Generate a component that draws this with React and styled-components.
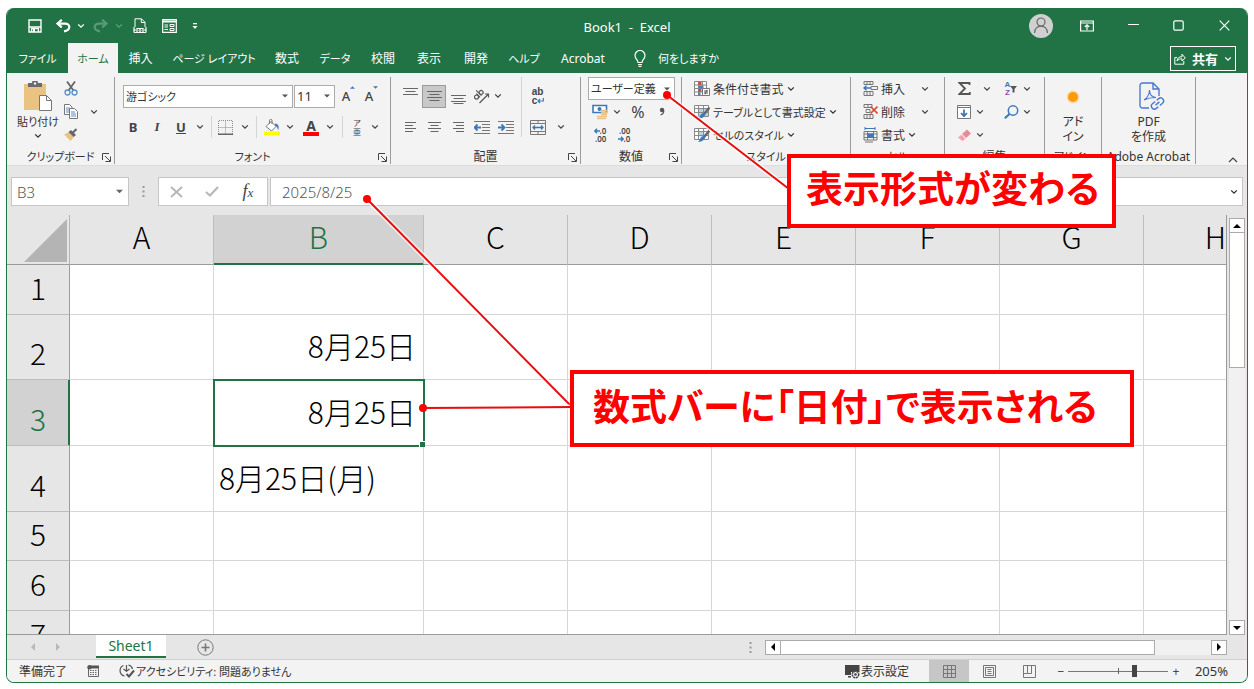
import { useState } from "react";
import styled, { createGlobalStyle } from "styled-components";

const tabs = [
  { name: "ファイル", width: 61, kana: true },
  { name: "ホーム", width: 50, kana: true },
  { name: "挿入", width: 45 },
  { name: "ページ レイアウト", width: 102, kana: true },
  { name: "数式", width: 44 },
  { name: "データ", width: 52, kana: true },
  { name: "校閲", width: 44 },
  { name: "表示", width: 48 },
  { name: "開発", width: 46 },
  { name: "ヘルプ", width: 50, kana: true },
  { name: "Acrobat", width: 68 },
];

const columns = [
  { name: "A", width: 144 },
  { name: "B", width: 210 },
  { name: "C", width: 144 },
  { name: "D", width: 144 },
  { name: "E", width: 144 },
  { name: "F", width: 144 },
  { name: "G", width: 144 },
  { name: "H", width: 144 },
];

const rows = [
  { name: "1", height: 50 },
  { name: "2", height: 65, cells: { B: { text: "8月25日", align: "right" } } },
  { name: "3", height: 66, cells: { B: { text: "8月25日", align: "right" } } },
  { name: "4", height: 66, cells: { B: { text: "8月25日(月)", align: "left" } } },
  { name: "5", height: 49 },
  { name: "6", height: 50 },
  { name: "7", height: 50 },
];

/* icons */

function Chevron() {
  return (
    <svg width="8" height="6" viewBox="0 0 8 6" fill="none" stroke="currentColor" strokeWidth="1.3">
      <path d="M1.2 1.4 4 4.2 6.8 1.4" />
    </svg>
  );
}

function Triangle({ dir = "down", size = 6 }) {
  const points = {
    down: "0,2 8,2 4,6",
    up: "0,6 8,6 4,2",
    left: "6,0 6,8 2,4",
    right: "2,0 2,8 6,4",
  };
  return (
    <svg width={size} height={size} viewBox="0 0 8 8" fill="currentColor">
      <polygon points={points[dir]} />
    </svg>
  );
}

function Launcher() {
  return (
    <svg width="9" height="9" viewBox="0 0 9 9" fill="none" stroke="#444" strokeWidth="1">
      <path d="M.5 7V.5H7M3 3l5 5M8.5 3.5v5h-5" />
    </svg>
  );
}

function SaveIcon() {
  return (
    <svg width="14" height="14" viewBox="0 0 14 14" fill="none" stroke="#fff" strokeWidth="1.4">
      <path d="M1 1h12v12H1z" />
      <path d="M1 8h12" />
      <path d="M3.600 13V9.500h6.800V13" />
      <path d="M5 10h2v3H5z" fill="#fff" stroke="none" />
    </svg>
  );
}

function UndoIcon({ flip }) {
  return (
    <svg width="15" height="14" viewBox="0 0 15 14" fill="none" stroke={flip ? "#5a9a76" : "#fff"} strokeWidth="2.2">
      <g transform={flip ? "matrix(-1 0 0 1 15 0)" : undefined}>
        <path d="M5.8.8 1.6 4.6l4.2 3.8" />
        <path d="M1.8 4.6H9c6 0 5.8 7-1 7.8" />
      </g>
    </svg>
  );
}

function PrintPreviewIcon() {
  return (
    <svg width="14" height="16" viewBox="0 0 14 16" fill="none" stroke="#fff">
      <path d="M2 9V.8h6.5L12 4.3V9M8.3 1v3.5H12" />
      <path d="M1 9v5.5M13 9v5.5M1 12h2M11 12h2M1 14.5h12M4 10.5h6v4H4z" strokeWidth="1.2" />
      <circle cx="7" cy="12.5" r="1" />
    </svg>
  );
}

function FormIcon() {
  return (
    <svg width="15" height="14" viewBox="0 0 15 14" fill="none" stroke="#fff" strokeWidth="1.2">
      <path d="M.7.7h13.6v12.6H.7z" />
      <path d="M.7 2.5h13.6" strokeWidth="2" />
      <path d="M2.5 6h3.5M2.5 8h3.5M2.5 10.500h3.5M8 5.500h4v2H8zM8 9.500h4v2H8z" strokeWidth="1" />
    </svg>
  );
}

function CustomizeIcon() {
  return (
    <svg width="6" height="8" viewBox="0 0 6 8" fill="#fff">
      <path d="M1 1h4v1.2H1zM.5 4h5L3 7z" />
    </svg>
  );
}

function PersonIcon() {
  return (
    <svg width="16" height="17" viewBox="0 0 16 17" fill="none" stroke="#666" strokeWidth="1.2">
      <circle cx="8" cy="5" r="4" />
      <path d="M1.500 16c.5-9.300 12.500-9.300 13 0" />
    </svg>
  );
}

function RibbonOptionsIcon() {
  return (
    <svg width="14" height="12" viewBox="0 0 14 12" fill="none" stroke="#fff" strokeWidth="1.2">
      <path d="M.6 1h12.8v10H.6zM.6 3h12.8M7 10V5M4.8 7 7 4.8 9.2 7" />
    </svg>
  );
}

function MinimizeIcon() {
  return (
    <svg width="11" height="11" viewBox="0 0 11 11" stroke="#fff" strokeWidth="1.2">
      <path d="M0 4.500h11" />
    </svg>
  );
}

function MaximizeIcon() {
  return (
    <svg width="11" height="11" viewBox="0 0 11 11" fill="none" stroke="#fff" strokeWidth="1.2">
      <rect x=".8" y=".8" width="9.4" height="9.4" rx="1.5" />
    </svg>
  );
}

function CloseIcon() {
  return (
    <svg width="11" height="11" viewBox="0 0 11 11" stroke="#fff" strokeWidth="1.2">
      <path d="M.7.7l9.6 9.6M10.3.7.7 10.3" />
    </svg>
  );
}

function BulbIcon() {
  return (
    <svg width="12" height="17" viewBox="0 0 12 17" fill="none" stroke="#fff" strokeWidth="1.2">
      <path d="M4 12.500C4 9.500 1 9 1 5.500a5 5 0 0 1 10 0c0 3.500-3 4-3 7z" />
      <path d="M4 14.500h4M4.500 16.300h3" />
    </svg>
  );
}

function ShareIcon() {
  return (
    <svg width="12" height="12" viewBox="0 0 12 12" fill="none" stroke="#fff">
      <path d="M3 4.500H.8v6.700h9V8" />
      <path d="M3 8c.3-3 2-4.300 5-4.300V1.200L11.300 5 8 8V5.800C6 5.800 4.300 6.300 3 8z" />
    </svg>
  );
}

function PasteIcon() {
  return (
    <svg width="28" height="30" viewBox="0 0 28 30">
      <path d="M0 3h22v26H0z" fill="#eac282" />
      <path d="M4 2h4a3 3 0 0 1 6 0h4v4H4z" fill="#6b6b6b" />
      <circle cx="11" cy="2.500" r="1.200" fill="#f3f3f3" />
      <path d="M15.500 14.500h7l5 5v10h-12z" fill="#fff" stroke="#777" />
      <path d="M22.500 14.500v5h5" fill="none" stroke="#777" />
    </svg>
  );
}

function CutIcon() {
  return (
    <svg width="14" height="15" viewBox="0 0 14 15" fill="none">
      <path d="M3 .5 9.500 9.500M11 .5 4.500 9.500" stroke="#666" strokeWidth="1.8" />
      <circle cx="3.500" cy="11.500" r="2.500" stroke="#5b8dc4" strokeWidth="1.3" />
      <circle cx="10.500" cy="11.500" r="2.500" stroke="#5b8dc4" strokeWidth="1.3" />
    </svg>
  );
}

function CopyIcon() {
  return (
    <svg width="14" height="15" viewBox="0 0 14 15" fill="#fff" stroke="#777">
      <path d="M.5.5h5l2.500 2.500v7.500H.5z" />
      <path d="M2 4h4M2 6h4M2 8h4" stroke="#5b8dc4" />
      <path d="M5.500 4.500h5l3 3v7h-8z" />
      <path d="M7 8h4M7 10h5M7 12h5" stroke="#5b8dc4" />
    </svg>
  );
}

function PainterIcon() {
  return (
    <svg width="14" height="13" viewBox="0 0 14 13">
      <path d="M0 6.500 5 4l5 5-3.500 4z" fill="#eac282" />
      <path d="M4.500 4 7 2l5 5-2.300 2z" fill="#666" />
      <path d="M9 4.500 12.500 1" stroke="#666" strokeWidth="2.2" />
    </svg>
  );
}

function BordersIcon() {
  return (
    <svg width="15" height="15" viewBox="0 0 15 15" fill="none" stroke="#8a8a8a">
      <path d="M.5 14V.5h14V14M7.500.5V14M.5 7.500h14" strokeDasharray="1 1" />
      <path d="M0 14.300h15" stroke="#666" strokeWidth="1.400" />
    </svg>
  );
}

function FillColorIcon() {
  return (
    <svg width="16" height="17" viewBox="0 0 16 17" fill="none">
      <path d="M2 7.500 7 2.500l5 5-4.500 4.500z" fill="#fff" stroke="#777" />
      <path d="M5.500 5V1.500c0-1.500 2.500-1.500 2.500 0V5" stroke="#777" />
      <path d="M11 4.500c4 .5 4.500 3.500 3 7-.5-3-1-4-3-4.500z" fill="#4a7ebb" />
      <path d="M0 12.500h16v4H0z" fill="#ff0" />
    </svg>
  );
}

function AlignIcon({ kind }) {
  const lines = {
    top: "M0 .5h15M2.500 3.500h10M0 6.500h15",
    middle: "M0 3.500h15M2.500 6.500h10M0 9.500h15M2.500 12.500h10",
    bottom: "M0 7.500h15M2.500 10.500h10M0 13.500h15M2.500 15.500h10",
    left: "M2 3.500h11M2 6.500h8M2 9.500h11M2 12.500h8",
    center: "M1 3.500h13M3.500 6.500h8M1 9.500h13M3.500 12.500h8",
    right: "M2 3.500h11M5 6.500h8M2 9.500h11M5 12.500h8",
  };
  return (
    <svg width="15" height="16" viewBox="0 0 15 16" stroke="#666">
      <path d={lines[kind]} />
    </svg>
  );
}

function OrientationIcon() {
  return (
    <svg width="16" height="15" viewBox="0 0 16 15" fill="none" stroke="#555" strokeWidth="1.200">
      <g transform="rotate(-45 5 7)">
        <circle cx="2.500" cy="6" r="2" />
        <path d="M4.800 3.500v5M7 1v7.500" />
        <circle cx="9" cy="6" r="2" />
      </g>
      <path d="M5.500 14 14 5.500M11 5h3.500v3.500" />
    </svg>
  );
}

function IndentIcon({ inward }) {
  return (
    <svg width="16" height="13" viewBox="0 0 16 13" fill="none">
      <path d="M0 .5h16M8 3.500h8M8 6.500h8M8 9.500h8M0 12.500h16" stroke="#777" />
      <path
        d={inward ? "M0 6.500h6M3.500 3.500l3 3-3 3" : "M1 6.500h6M3.500 3.500l-3 3 3 3"}
        stroke="#3c78b8"
        strokeWidth="1.8"
      />
    </svg>
  );
}

function ReturnIcon() {
  return (
    <svg width="7" height="6" viewBox="0 0 7 6" fill="none" stroke="#3c78b8" strokeWidth="1.2">
      <path d="M6.300 0v3H1M3 1 1 3l2 2" />
    </svg>
  );
}

function MergeIcon() {
  return (
    <svg width="16" height="15" viewBox="0 0 16 15" fill="none" stroke="#777">
      <path d="M.5.5h15v14H.5zM.5 3.500h15M.5 11.500h15M8 .5v3M8 11.500v3" />
      <path d="M3 7.500h10M5 5.500l-2 2 2 2M11 5.500l2 2-2 2" stroke="#3c78b8" strokeWidth="1.3" />
    </svg>
  );
}

function CurrencyIcon() {
  return (
    <svg width="16" height="16" viewBox="0 0 16 16" fill="none">
      <path d="M1 1.500h13.500v7H1z" fill="#fff" stroke="#3c78b8" strokeWidth="1.6" />
      <circle cx="7.500" cy="5" r="2" fill="#3c78b8" />
      <path d="M9 6.500h6M9 8.500h6M9 10.500h6M5 12.500h10M5 14.500h9" stroke="#e9c184" strokeWidth="1.6" />
    </svg>
  );
}

function CommaIcon() {
  return (
    <svg width="6" height="9" viewBox="0 0 6 9">
      <circle cx="3" cy="3" r="2.200" fill="#555" />
      <path d="M4.700 3C5 5.500 3.500 7.300 1.500 8" fill="none" stroke="#555" strokeWidth="1.200" />
    </svg>
  );
}

function SmallArrow({ dir }) {
  return (
    <svg width="6" height="6" viewBox="0 0 6 6" fill="none" stroke="#3c78b8" strokeWidth="1.4">
      <path d={dir === "left" ? "M6 3H1M3 .8.8 3 3 5.200" : "M0 3h5M3 .8 5.200 3 3 5.200"} />
    </svg>
  );
}

function ConditionalIcon() {
  return (
    <svg width="16" height="16" viewBox="0 0 16 16" fill="none">
      <path d="M.5.5h12v14H.5zM.5 4h12M.5 7.500h12M.5 11h12M4.500.5v14M8.500.5v14" stroke="#888" fill="#fff" />
      <path d="M4.500 1h3v3h-3zM4.500 8h3v3h-3z" fill="#c94f3c" />
      <path d="M4.500 4.500h5v3h-5zM4.500 11.500h2v3h-2z" fill="#4a7ebb" />
      <path d="M8.500 7.500h7v7h-7z" fill="#fff" stroke="#777" />
      <path d="M10 10h4M10 12h4M13 8.800l-2 4.500" stroke="#555" />
    </svg>
  );
}

function TableStyleIcon({ cell }) {
  return (
    <svg width="16" height="16" viewBox="0 0 16 16" fill="none">
      <path d="M.5 1.500h14v11H.5z" fill="#fff" />
      <path d={cell ? "M4.500 4.500h6v5h-6z" : "M4.500 5h10v7h-10z"} fill="#b9d0e8" />
      <path d="M.5 1.500h14v11H.5zM.5 4.500h14M.5 8.500h14M4.500 1.500v11M9.500 1.500v11" stroke="#8a8a8a" />
      <path d="M15.500 3.500 10 10" stroke="#666" strokeWidth="2.4" />
      <path d="M10.500 9c1 1 1 2 0 3-1.500 2-4 3-6.500 3C6.500 13 6 8.500 10.500 9z" fill="#3c78b8" />
    </svg>
  );
}

function InsertCellsIcon() {
  return (
    <svg width="15" height="15" viewBox="0 0 15 15" fill="none" stroke="#777">
      <path d="M1 .5h9v3H1zM4 .5v3M7 .5v3M1 10.500h9v4H1zM4 10.500v4M7 10.500v4M8 5.500h6.500v3H8z" />
      <path d="M1 7h7M3.500 4.800 1 7l2.500 2.200" stroke="#3c78b8" strokeWidth="1.5" />
    </svg>
  );
}

function DeleteCellsIcon() {
  return (
    <svg width="15" height="15" viewBox="0 0 15 15" fill="none" stroke="#777">
      <path d="M1 .5h8v3H1zM5 .5v3M1 10.500h9v4H1zM4 10.500v4M7 10.500v4M3 5.500h4v3H3z" />
      <path d="M7.500 2.500l7 7M14.500 2.500l-7 7" stroke="#d8492f" strokeWidth="1.7" />
    </svg>
  );
}

function FormatCellsIcon() {
  return (
    <svg width="15" height="16" viewBox="0 0 15 16" fill="none" stroke="#777">
      <path d="M2 1.500h10M2 0v3M12 0v3" stroke="#3c78b8" />
      <path d="M1 4.500h13v8.500H1zM1 7h13M1 10.500h13M4.500 4.500v8.500M10.500 4.500v8.500M2 15h8" />
      <path d="M4.500 6.500h6v4.500h-6z" fill="#3c78b8" stroke="none" />
    </svg>
  );
}

function SigmaIcon() {
  return (
    <svg width="13" height="13" viewBox="0 0 13 13" fill="none" stroke="#555" strokeWidth="1.8">
      <path d="M11.500 3V1H1.500L7 6.500l-5.500 5.500h10.300V10" />
    </svg>
  );
}

function FunnelIcon() {
  return (
    <svg width="7" height="8" viewBox="0 0 7 8" fill="#555">
      <path d="M0 1h7L4.500 4v3.500h-2V4z" />
    </svg>
  );
}

function FillDownIcon() {
  return (
    <svg width="14" height="14" viewBox="0 0 14 14" fill="none">
      <path d="M.5.5h13v13H.5zM.5 2.500h13" fill="#fff" stroke="#777" />
      <path d="M7 4.500v6.500M4 8l3 3.200L10 8" stroke="#3c78b8" strokeWidth="1.8" />
    </svg>
  );
}

function FindIcon() {
  return (
    <svg width="15" height="14" viewBox="0 0 15 14" fill="none" stroke="#3c78b8" strokeWidth="1.5">
      <circle cx="9" cy="5.500" r="4.700" />
      <path d="M5.500 9 .8 13.300" strokeWidth="2" />
    </svg>
  );
}

function EraserIcon() {
  return (
    <svg width="13" height="12" viewBox="0 0 13 12">
      <path d="M4 5 9 .5l4 4L8 9z" fill="#e88a98" />
      <path d="M3.300 5.700 7.300 9.700 4.500 12 0 8.500z" fill="#f0a3ae" />
    </svg>
  );
}

function PdfIcon() {
  return (
    <svg width="32" height="29" viewBox="-6 0 32 29" fill="none" stroke="#4a78d0" strokeWidth="1.4">
      <path d="M10 26H3.500A2.500 2.500 0 0 1 1 23.500v-20A2.500 2.500 0 0 1 3.500 1H14l6 6v7M14 1v6h6" />
      <path d="M5 18c3-1.500 5.500-6 5.500-10 0 4 2 7 6.500 7.500-4 0-8 .5-12 2.500z" strokeWidth="1.1" />
      <g transform="rotate(-40 18.500 21.500)">
        <path d="M17 24.500h-2.500a3 3 0 0 1 0-6H18M20 18.500h2.500a3 3 0 0 1 0 6H19M16 21.500h5" />
      </g>
    </svg>
  );
}

function AddInIcon() {
  return (
    <svg width="14" height="14" viewBox="0 0 14 14">
      <circle cx="7" cy="7" r="6.500" fill="#fbdcae" />
      <circle cx="7" cy="7" r="5" fill="#ff9a0d" />
    </svg>
  );
}

function DotsIcon() {
  return (
    <svg width="3" height="11" viewBox="0 0 3 11" fill="#999">
      <path d="M.5 0h2v2h-2zM.5 4.500h2v2h-2zM.5 9h2v2h-2z" />
    </svg>
  );
}

function CancelIcon() {
  return (
    <svg width="13" height="12" viewBox="0 0 13 12" stroke="#b5b5b5" strokeWidth="1.8">
      <path d="M1 1l11 10M12 1 1 11" />
    </svg>
  );
}

function EnterIcon() {
  return (
    <svg width="14" height="11" viewBox="0 0 14 11" fill="none" stroke="#b8b8b8" strokeWidth="2.2">
      <path d="M1 6l4 3.500L13 1" />
    </svg>
  );
}

function AddSheetIcon() {
  return (
    <svg width="17" height="17" viewBox="0 0 17 17" fill="none" stroke="#777">
      <circle cx="8.500" cy="8.500" r="7.700" />
      <path d="M8.500 4.500v8M4.500 8.500h8" strokeWidth="1.6" />
    </svg>
  );
}

function MacroIcon() {
  return (
    <svg width="12" height="12" viewBox="0 0 12 12">
      <path d="M3 .5h9v3H3z" fill="#555" />
      <circle cx="2.500" cy="2.200" r="2.200" fill="#555" />
      <path d="M1.500 4v7.500h10V3.500" fill="none" stroke="#666" />
      <path d="M3 5.500h7.500M3 7.500h7.500M3 9.500h7.500" stroke="#666" strokeDasharray="1.500 1" />
    </svg>
  );
}

function AccessibilityIcon() {
  return (
    <svg width="16" height="14" viewBox="0 0 16 14" fill="none" stroke="#555" strokeWidth="1.2">
      <path d="M4.500 1.500a5.500 5.500 0 0 0 1 10.500M9.500 1a5.500 5.500 0 0 1 4 4M7.500 1v6M4.500 5l3 2.200L10.500 5" />
      <path d="M7.500 10l2.500 2.500 5-6" strokeWidth="2" />
    </svg>
  );
}

function DisplaySettingsIcon() {
  return (
    <svg width="15" height="15" viewBox="0 0 15 15">
      <path d="M0 1h14.500v7H6v3H0zM3 12h3v1.500H3z" fill="#444" />
      <circle cx="10.500" cy="10.500" r="3.200" fill="#f3f3f3" stroke="#444" strokeWidth="1.5" strokeDasharray="2 .6" />
      <circle cx="10.500" cy="10.500" r="1.300" fill="#444" />
    </svg>
  );
}

function ViewIcon({ kind }) {
  const paths = {
    normal: "M.5.5h12v12H.5zM.5 4.500h12M.5 8.500h12M4.500.5v12M8.500.5v12",
    layout: "M.5.5h12v12H.5zM2.500 2.500h8v8h-8zM4.500 4.500h4M4.500 6.500h4M4.500 8.500h4",
    pageBreak: "M.5.5h12v12H.5zM.5 8.500H4.500V.5M4.500 8.500H8.500V.5",
  };
  return (
    <svg width="13" height="13" viewBox="0 0 13 13" fill="none" stroke="#777">
      <path d={paths[kind]} />
    </svg>
  );
}

/* small composed parts */

function More({ label, width = 18 }) {
  return (
    <SCTool type="button" aria-label={label} $width={width}>
      <Chevron />
    </SCTool>
  );
}

function Group({ name, width, launcher, kana, children }) {
  return (
    <SCGroup $width={width} aria-label={name}>
      <SCGroupBody>{children}</SCGroupBody>
      <SCGroupFooter $launcher={launcher} $kana={kana}>
        <span>{name}</span>
        {launcher && (
          <SCLauncher type="button" aria-label={`${name}の設定`}>
            <Launcher />
          </SCLauncher>
        )}
      </SCGroupFooter>
    </SCGroup>
  );
}

function Dropdown({ label, value, width, kana }) {
  return (
    <SCDropdown $width={width} $kana={kana}>
      <select aria-label={label} defaultValue={value}>
        <option>{value}</option>
      </select>
      <Triangle />
    </SCDropdown>
  );
}

function TitleBar() {
  return (
    <SCTitleBar>
      <SCQuickAccess>
        <SCTool type="button" aria-label="上書き保存" $width={29}><SaveIcon /></SCTool>
        <SCTool type="button" aria-label="元に戻す" $width={28}><UndoIcon /></SCTool>
        <More label="元に戻す履歴" width={8} />
        <SCTool type="button" aria-label="やり直し" $width={30}><UndoIcon flip /></SCTool>
        <SCTool type="button" aria-label="やり直し履歴" $width={8} $faded><Chevron /></SCTool>
        <SCTool type="button" aria-label="印刷プレビュー" $width={34}><PrintPreviewIcon /></SCTool>
        <SCTool type="button" aria-label="フォーム" $width={24}><FormIcon /></SCTool>
        <SCTool type="button" aria-label="カスタマイズ" $width={28}><CustomizeIcon /></SCTool>
      </SCQuickAccess>
      <SCTitle>Book1&nbsp; -&nbsp; Excel</SCTitle>
      <SCWindowButtons>
        <SCAvatar type="button" aria-label="アカウント"><PersonIcon /></SCAvatar>
        <SCTool type="button" aria-label="リボンの表示オプション" $width={46}><RibbonOptionsIcon /></SCTool>
        <SCTool type="button" aria-label="最小化" $width={46}><MinimizeIcon /></SCTool>
        <SCTool type="button" aria-label="最大化" $width={45}><MaximizeIcon /></SCTool>
        <SCTool type="button" aria-label="閉じる" $width={46}><CloseIcon /></SCTool>
      </SCWindowButtons>
    </SCTitleBar>
  );
}

function TabBar() {
  const [active, setActive] = useState("ホーム");

  return (
    <SCTabBar>
      {tabs.map((t) => (
        <SCTab
          type="button"
          key={t.name}
          $width={t.width}
          $kana={t.kana}
          $active={t.name === active}
          onClick={() => setActive(t.name)}
        >
          {t.name}
        </SCTab>
      ))}
      <SCTellMe type="button">
        <BulbIcon />
        何をしますか
      </SCTellMe>
      <SCShare type="button">
        <ShareIcon />
        共有
        <Chevron />
      </SCShare>
    </SCTabBar>
  );
}

function Ribbon() {
  return (
    <SCRibbon>
      <Group name="クリップボード" width={108} launcher kana>
        <SCClipboard>
          <SCBigButton type="button">
            <PasteIcon />
            <span>貼り付け</span>
            <Chevron />
          </SCBigButton>
          <SCStack>
            <SCLine><SCTool type="button" aria-label="切り取り" $width={20}><CutIcon /></SCTool></SCLine>
            <SCLine>
              <SCTool type="button" aria-label="コピー" $width={20}><CopyIcon /></SCTool>
              <More label="コピーのオプション" width={26} />
            </SCLine>
            <SCLine><SCTool type="button" aria-label="書式のコピー" $width={20}><PainterIcon /></SCTool></SCLine>
          </SCStack>
        </SCClipboard>
      </Group>

      <Group name="フォント" width={276} launcher kana>
        <SCTwoRows>
          <SCLine $indent={8}>
            <Dropdown label="フォント名" value="游ゴシック" width={170} kana />
            <SCSpace $width={1} />
            <Dropdown label="フォント サイズ" value="11" width={41} />
            <SCSpace $width={2} />
            <SCTool type="button" aria-label="フォント サイズの拡大" $width={23}>
              <SCFontSize>A</SCFontSize><SCCaret><Triangle dir="up" size={5} /></SCCaret>
            </SCTool>
            <SCTool type="button" aria-label="フォント サイズの縮小" $width={23}>
              <SCFontSize>A</SCFontSize><SCCaret><Triangle size={5} /></SCCaret>
            </SCTool>
          </SCLine>
          <SCLine $indent={6}>
            <SCTool type="button" $width={24}><SCGlyph $bold>B</SCGlyph></SCTool>
            <SCTool type="button" $width={24}><SCGlyph $italic>I</SCGlyph></SCTool>
            <SCTool type="button" $width={24}><SCGlyph $underline>U</SCGlyph></SCTool>
            <More label="下線" width={14} />
            <SCSpace $width={5} $ruled />
            <SCTool type="button" aria-label="罫線" $width={27}><BordersIcon /></SCTool>
            <More label="罫線の種類" width={12} />
            <SCSpace $width={6} $ruled />
            <SCTool type="button" aria-label="塗りつぶし" $width={29}><FillColorIcon /></SCTool>
            <More label="塗りつぶしの色" width={8} />
            <SCTool type="button" aria-label="文字色" $width={34}><SCFontColor>A</SCFontColor></SCTool>
            <More label="文字の色" width={4} />
            <SCSpace $width={11} $ruled />
            <SCTool type="button" aria-label="ふりがな" $width={28}>
              <SCRuby><span>ア</span><span>亜</span></SCRuby>
            </SCTool>
            <More label="ふりがなの設定" width={8} />
          </SCLine>
        </SCTwoRows>
      </Group>

      <Group name="配置" width={190} launcher>
        <SCAlignment>
          <SCTwoRows>
            <SCLine $indent={7}>
              <SCTool type="button" aria-label="上揃え" $width={24}><AlignIcon kind="top" /></SCTool>
              <SCTool type="button" aria-label="上下中央揃え" $width={24} $pressed><AlignIcon kind="middle" /></SCTool>
              <SCTool type="button" aria-label="下揃え" $width={24}><AlignIcon kind="bottom" /></SCTool>
              <SCTool type="button" aria-label="方向" $width={24}><OrientationIcon /></SCTool>
              <More label="方向の設定" width={8} />
            </SCLine>
            <SCLine $indent={7}>
              <SCTool type="button" aria-label="左揃え" $width={24}><AlignIcon kind="left" /></SCTool>
              <SCTool type="button" aria-label="中央揃え" $width={24}><AlignIcon kind="center" /></SCTool>
              <SCTool type="button" aria-label="右揃え" $width={24}><AlignIcon kind="right" /></SCTool>
              <SCTool type="button" aria-label="インデントを減らす" $width={24}><IndentIcon /></SCTool>
              <SCTool type="button" aria-label="インデントを増やす" $width={24}><IndentIcon inward /></SCTool>
            </SCLine>
          </SCTwoRows>
          <SCWrapTools>
            <SCLine>
              <SCTool type="button" aria-label="折り返して全体を表示する" $width={32}>
                <SCWrapText><span>ab</span><span>c<ReturnIcon /></span></SCWrapText>
              </SCTool>
            </SCLine>
            <SCLine>
              <SCTool type="button" aria-label="セルを結合して中央揃え" $width={32}><MergeIcon /></SCTool>
              <More label="結合の設定" width={14} />
            </SCLine>
          </SCWrapTools>
        </SCAlignment>
      </Group>

      <Group name="数値" width={101} launcher>
        <SCStack>
          <SCLine $indent={7}><Dropdown label="表示形式" value="ユーザー定義" width={87} kana /></SCLine>
          <SCLine $indent={9}>
            <SCTool type="button" aria-label="通貨" $width={20}><CurrencyIcon /></SCTool>
            <More label="通貨の種類" width={14} />
            <SCTool type="button" $width={28}><SCPercentGlyph>%</SCPercentGlyph></SCTool>
            <SCTool type="button" aria-label="桁区切り" $width={20}><CommaIcon /></SCTool>
          </SCLine>
          <SCLine $indent={7}>
            <SCTool type="button" aria-label="小数点以下の表示桁数を増やす" $width={24}>
              <SCDecimals><span><SmallArrow dir="left" />.0</span><span>.00</span></SCDecimals>
            </SCTool>
            <SCTool type="button" aria-label="小数点以下の表示桁数を減らす" $width={24}>
              <SCDecimals><span>.00</span><span><SmallArrow dir="right" />.0</span></SCDecimals>
            </SCTool>
          </SCLine>
        </SCStack>
      </Group>

      <Group name="スタイル" width={169} kana>
        <SCStack>
          <SCLine $indent={12}><SCTextTool type="button"><ConditionalIcon />条件付き書式<Chevron /></SCTextTool></SCLine>
          <SCLine $indent={12}><SCTextTool type="button" $kana><TableStyleIcon />テーブルとして書式設定<Chevron /></SCTextTool></SCLine>
          <SCLine $indent={12}><SCTextTool type="button" $kana><TableStyleIcon cell />セルのスタイル<Chevron /></SCTextTool></SCLine>
        </SCStack>
      </Group>

      <Group name="セル" width={94} kana>
        <SCStack>
          <SCLine $indent={12}><SCTextTool type="button"><InsertCellsIcon />挿入</SCTextTool><More label="挿入" width={40} /></SCLine>
          <SCLine $indent={12}><SCTextTool type="button"><DeleteCellsIcon />削除</SCTextTool><More label="削除" width={40} /></SCLine>
          <SCLine $indent={12}><SCTextTool type="button"><FormatCellsIcon />書式<Chevron /></SCTextTool></SCLine>
        </SCStack>
      </Group>

      <Group name="編集" width={100}>
        <SCStack>
          <SCLine $indent={8}>
            <SCTool type="button" aria-label="合計" $width={22}><SigmaIcon /></SCTool>
            <More label="合計の種類" width={24} />
            <SCTool type="button" aria-label="並べ替えとフィルター" $width={24}>
              <SCSort><span>A</span><span>Z</span></SCSort><FunnelIcon />
            </SCTool>
            <More label="並べ替え" width={8} />
          </SCLine>
          <SCLine $indent={8}>
            <SCTool type="button" aria-label="フィル" $width={22}><FillDownIcon /></SCTool>
            <More label="フィルの方向" width={10} />
            <SCSpace $width={14} />
            <SCTool type="button" aria-label="検索と選択" $width={24}><FindIcon /></SCTool>
            <More label="検索" width={8} />
          </SCLine>
          <SCLine $indent={8}>
            <SCTool type="button" aria-label="クリア" $width={22}><EraserIcon /></SCTool>
            <More label="クリアの種類" width={10} />
          </SCLine>
        </SCStack>
      </Group>

      <Group name="アドイン" width={57} kana>
        <SCTallButton type="button">
          <SCTallIcon><AddInIcon /></SCTallIcon>
          <span>アド</span>
          <span>イン</span>
        </SCTallButton>
      </Group>

      <Group name="Adobe Acrobat" width={94}>
        <SCTallButton type="button">
          <SCTallIcon><PdfIcon /></SCTallIcon>
          <span>PDF</span>
          <span>を作成</span>
        </SCTallButton>
      </Group>

      <SCCollapse type="button" aria-label="リボンを折りたたむ">
        <svg width="10" height="6" viewBox="0 0 10 6" fill="none" stroke="#444" strokeWidth="1.2">
          <path d="M1 5l4-4 4 4" />
        </svg>
      </SCCollapse>
    </SCRibbon>
  );
}

function FormulaBar() {
  return (
    <SCFormulaBar>
      <SCNameBox>
        <input aria-label="名前ボックス" defaultValue="B3" />
        <Triangle size={7} />
      </SCNameBox>
      <SCDots><DotsIcon /></SCDots>
      <SCFormulaTools>
        <SCTool type="button" aria-label="キャンセル" $width={35}><CancelIcon /></SCTool>
        <SCTool type="button" aria-label="入力" $width={36}><EnterIcon /></SCTool>
        <SCTool type="button" aria-label="関数の挿入" $width={36}><SCFx>f<small>x</small></SCFx></SCTool>
      </SCFormulaTools>
      <SCFormula>
        <input aria-label="数式バー" defaultValue="2025/8/25" />
        <Chevron />
      </SCFormula>
    </SCFormulaBar>
  );
}

function Sheet() {
  return (
    <SCSheetArea>
      <SCSheet>
        <SCTable>
          <colgroup>
            <SCCol $width={63} />
            {columns.map((c) => (
              <SCCol key={c.name} $width={c.width} />
            ))}
          </colgroup>
          <thead>
            <tr>
              <SCCorner>
                <svg width="43" height="43" viewBox="0 0 43 43" fill="#b4b4b4">
                  <polygon points="43,0 43,43 0,43" />
                </svg>
              </SCCorner>
              {columns.map((c) => (
                <SCColumnHead scope="col" key={c.name} $selected={c.name === "B"}>
                  {c.name}
                </SCColumnHead>
              ))}
            </tr>
          </thead>
          <tbody>
            {rows.map((r) => (
              <SCRow key={r.name} $height={r.height}>
                <SCRowHead scope="row" $selected={r.name === "3"}>
                  {r.name}
                </SCRowHead>
                {columns.map((c) => (
                  <SCCell
                    key={c.name}
                    $align={r.cells?.[c.name]?.align}
                    $selected={r.name === "3" && c.name === "B"}
                  >
                    {r.cells?.[c.name]?.text}
                  </SCCell>
                ))}
              </SCRow>
            ))}
          </tbody>
        </SCTable>
      </SCSheet>
      <SCVerticalScroll>
        <SCScrollButton type="button" aria-label="上へ"><Triangle dir="up" size={8} /></SCScrollButton>
        <SCVerticalTrack><SCVerticalThumb /></SCVerticalTrack>
        <SCScrollButton type="button" aria-label="下へ"><Triangle size={8} /></SCScrollButton>
      </SCVerticalScroll>
    </SCSheetArea>
  );
}

function SheetTabs() {
  return (
    <SCSheetTabs>
      <SCSheetNav>
        <SCTool type="button" aria-label="前のシート" $width={25} $dim><Triangle dir="left" size={8} /></SCTool>
        <SCTool type="button" aria-label="次のシート" $width={25} $dim><Triangle dir="right" size={8} /></SCTool>
      </SCSheetNav>
      <SCSheetTab type="button">Sheet1</SCSheetTab>
      <SCAddSheet type="button" aria-label="新しいシート"><AddSheetIcon /></SCAddSheet>
      <SCHorizontalScroll>
        <DotsIcon />
        <SCSpace $width={13} />
        <SCScrollButton type="button" aria-label="左へ"><Triangle dir="left" size={8} /></SCScrollButton>
        <SCHorizontalTrack><SCHorizontalThumb /></SCHorizontalTrack>
        <SCScrollButton type="button" aria-label="右へ"><Triangle dir="right" size={8} /></SCScrollButton>
      </SCHorizontalScroll>
    </SCSheetTabs>
  );
}

function StatusBar() {
  const [view, setView] = useState("normal");
  const [zoom, setZoom] = useState(67);

  return (
    <SCStatusBar>
      <SCStatusText>準備完了</SCStatusText>
      <SCTool type="button" aria-label="マクロの記録" $width={52}><MacroIcon /></SCTool>
      <SCStatusButton type="button" $kana><AccessibilityIcon />アクセシビリティ: 問題ありません</SCStatusButton>
      <SCStatusRight>
        <SCStatusButton type="button"><DisplaySettingsIcon />表示設定</SCStatusButton>
        <SCSpace $width={20} />
        {["normal", "layout", "pageBreak"].map((k) => (
          <SCView type="button" key={k} aria-label={k} $active={view === k} onClick={() => setView(k)}>
            <ViewIcon kind={k} />
          </SCView>
        ))}
        <SCSpace $width={5} />
        <SCTool type="button" aria-label="縮小" $width={14}>−</SCTool>
        <SCZoom type="range" aria-label="ズーム" value={zoom} onChange={(e) => setZoom(e.target.value)} />
        <SCTool type="button" aria-label="拡大" $width={16}>+</SCTool>
        <SCPercent type="button">205%</SCPercent>
      </SCStatusRight>
    </SCStatusBar>
  );
}

function Annotations() {
  const lines = [
    [667, 95, 789, 189],
    [367, 199, 573, 408],
    [423, 408, 573, 407],
  ];
  return (
    <>
      <SCLeaders width="1254" height="689" viewBox="0 0 1254 689">
        {lines.map(([x1, y1, x2, y2]) => (
          <g key={x1}>
            <line x1={x1} y1={y1} x2={x2} y2={y2} stroke="#fff" strokeWidth="5" strokeOpacity="0.7" />
            <line x1={x1} y1={y1} x2={x2} y2={y2} stroke="#e60f0f" strokeWidth="2" />
            <circle cx={x1} cy={y1} r="4" fill="#f00" />
          </g>
        ))}
      </SCLeaders>
      <SCCallout $left={787} $top={154} $padding="7px 13px 11px 15px">表示形式が変わる</SCCallout>
      <SCCallout $left={570} $top={370} $padding="9px 33px 12px 19px">数式バーに「日付」で表示される</SCCallout>
    </>
  );
}

export default function App() {
  return (
    <>
      <GlobalStyle />
      <SCPage>
        <SCWindow>
          <TitleBar />
          <TabBar />
          <Ribbon />
          <FormulaBar />
          <Sheet />
          <SheetTabs />
          <StatusBar />
        </SCWindow>
        <Annotations />
      </SCPage>
    </>
  );
}

const GlobalStyle = createGlobalStyle`
  * {
    box-sizing: border-box;
  }

  body {
    margin: 0;
    background: #fff;
  }

  body, button, input, select {
    font-family: 'Noto Sans', 'Noto Sans CJK JP', sans-serif;
    font-size: 12px;
    font-feature-settings: 'palt';
    color: #333;
  }

  button {
    margin: 0;
    padding: 0;
    border: none;
    background: none;
    white-space: nowrap;
  }

  svg {
    display: block;
    flex-shrink: 0;
  }
`

const SCPage = styled.div`
  position: relative;
  height: 100vh;
  padding: 8px 6px 6px;
  overflow: hidden;
`

const SCWindow = styled.main`
  display: flex;
  flex-direction: column;
  height: 100%;

  border: 1px solid #217346;
  border-top: none;
  border-radius: 8px;
  overflow: hidden;

  background-color: #e6e6e6;
`

const SCTitleBar = styled.header`
  display: grid;
  grid-template-columns: 1fr auto 1fr;
  align-items: center;
  flex-shrink: 0;

  height: 35px;

  background-color: #217346;
`

const SCQuickAccess = styled.div`
  display: flex;
  align-items: center;

  padding-left: 13px;

  button {
    color: #fff;
  }
`

const SCTitle = styled.div`
  padding-top: 2px;

  font-size: 13px;
  line-height: 18px;
  color: #fff;
`

const SCWindowButtons = styled.div`
  display: flex;
  align-items: center;
  justify-content: flex-end;
`

const SCAvatar = styled.button`
  display: flex;
  align-items: center;
  justify-content: center;

  width: 24px;
  height: 24px;
  margin-right: 11px;

  border-radius: 50%;

  background-color: #d0d0d0;
`

const SCTool = styled.button`
  display: flex;
  align-items: center;
  justify-content: center;
  flex-shrink: 0;

  width: ${({ $width }) => $width}px;
  height: 23px;

  border: ${({ $pressed }) => ($pressed ? "1px solid #9a9a9a" : "none")};
  background-color: ${({ $pressed }) => ($pressed ? "#c8c8c8" : "transparent")};
  opacity: ${({ $faded }) => ($faded ? 0.3 : 1)};
  color: ${({ $dim }) => ($dim ? "#b8b8b8" : "#444")};
`

const SCTabBar = styled.nav`
  display: flex;
  flex-shrink: 0;

  height: 30px;

  background-color: #217346;
`

const SCTab = styled.button`
  flex-shrink: 0;
  width: ${({ $width }) => $width}px;

  font-size: ${({ $kana }) => ($kana ? 11 : 12)}px;
  color: ${({ $active }) => ($active ? "#217346" : "#fff")};
  background-color: ${({ $active }) => ($active ? "#f3f3f3" : "transparent")};
`

const SCTellMe = styled.button`
  display: flex;
  align-items: center;
  gap: 12px;

  padding-left: 17px;

  font-size: 11px;
  color: #fff;
`

const SCShare = styled.button`
  display: flex;
  align-items: center;
  justify-content: space-between;

  width: 66px;
  height: 25px;
  margin: 3px 11px 0 auto;
  padding: 0 3px;

  border: 1px solid #fff;

  font-size: 13px;
  font-weight: 700;
  color: #fff;
`

const SCRibbon = styled.section`
  display: flex;
  flex-shrink: 0;

  height: 93px;
  padding-top: 4px;

  border-bottom: 1px solid #dcdcdc;

  background-color: #f3f3f3;
`

const SCGroup = styled.section`
  display: flex;
  flex-direction: column;
  flex-shrink: 0;

  width: ${({ $width }) => $width}px;
  height: 87px;

  border-right: 1px solid #9b9b9b;
`

const SCGroupBody = styled.div`
  height: 73px;
`

const SCGroupFooter = styled.div`
  display: grid;
  grid-template-columns: ${({ $launcher }) => ($launcher ? "1fr 12px" : "1fr")};
  align-items: center;

  height: 14px;
  padding-left: ${({ $launcher }) => ($launcher ? 12 : 0)}px;

  font-size: ${({ $kana }) => ($kana ? 11 : 12)}px;
  line-height: 14px;
  text-align: center;
  white-space: nowrap;
`

const SCLauncher = styled.button`
  display: flex;
`

const SCClipboard = styled.div`
  display: flex;
  padding-left: 8px;
`

const SCBigButton = styled.button`
  display: flex;
  flex-direction: column;
  align-items: center;

  width: 46px;
  padding-top: 4px;

  font-size: 11px;
  line-height: 22px;
`

const SCStack = styled.div`
  display: grid;
  grid-template-rows: repeat(3, 23px);
`

const SCLine = styled.div`
  display: flex;
  align-items: center;

  padding-left: ${({ $indent = 0 }) => $indent}px;
`

const SCTwoRows = styled.div`
  display: grid;
  grid-template-rows: 24px 24px;
  row-gap: 7px;

  padding-top: 7px;
`

const SCSpace = styled.span`
  flex-shrink: 0;
  width: ${({ $width }) => $width}px;
  height: 22px;

  border-right: ${({ $ruled }) => ($ruled ? "1px solid #d5d5d5" : "none")};
`

const SCDropdown = styled.span`
  display: grid;
  grid-template-columns: 1fr 14px;
  align-items: center;
  flex-shrink: 0;

  width: ${({ $width }) => $width}px;
  height: 23px;

  border: 1px solid #ababab;
  background-color: #fff;

  select {
    grid-area: 1 / 1 / 2 / 3;
    width: 100%;
    height: 21px;
    padding: 0 0 0 2px;
    appearance: none;
    border: none;
    background: transparent;
    font-size: ${({ $kana }) => ($kana ? 11 : 13)}px;
  }

  svg {
    grid-area: 1 / 2;
    justify-self: center;
    pointer-events: none;
    color: #555;
  }
`

const SCFontSize = styled.span`
  font-size: 13px;
  font-weight: 500;
`

const SCCaret = styled.span`
  align-self: flex-start;
  color: #3c78b8;
`

const SCGlyph = styled.span`
  font-size: 13px;
  font-weight: 700;
  font-style: ${({ $italic }) => ($italic ? "italic" : "normal")};
  font-family: ${({ $italic }) => ($italic ? "'Liberation Serif', serif" : "inherit")};
  text-decoration: ${({ $underline }) => ($underline ? "underline" : "none")};
`

const SCPercentGlyph = styled.span`
  font-size: 16px;
`

const SCFontColor = styled.span`
  width: 16px;

  border-bottom: 4px solid #f00;

  font-size: 14px;
  font-weight: 700;
  line-height: 13px;
`

const SCRuby = styled.span`
  display: flex;
  flex-direction: column;

  font-size: 8px;
  line-height: 9px;
`

const SCAlignment = styled.div`
  display: flex;
`

const SCWrapTools = styled.div`
  display: grid;
  grid-template-rows: 24px 24px;
  row-gap: 7px;

  height: 60px;
  margin-left: auto;
  margin-right: 12px;
  padding-top: 7px;

  border-left: 1px solid #d5d5d5;
`

const SCWrapText = styled.span`
  display: flex;
  flex-direction: column;

  font-family: 'Liberation Sans', sans-serif;
  font-size: 10px;
  font-weight: 700;
  line-height: 9px;

  span {
    display: flex;
    align-items: center;
  }
`

const SCDecimals = styled.span`
  display: flex;
  flex-direction: column;

  font-size: 8px;
  font-weight: 600;
  line-height: 8px;

  span {
    display: flex;
    align-items: center;
    justify-content: flex-end;
  }
`

const SCTextTool = styled.button`
  display: flex;
  align-items: center;
  gap: 3px;

  height: 22px;

  font-size: ${({ $kana }) => ($kana ? 11 : 12)}px;
`

const SCSort = styled.span`
  display: flex;
  flex-direction: column;

  font-family: 'Liberation Sans', sans-serif;
  font-size: 8px;
  font-weight: 700;
  line-height: 8px;
  color: #3c78b8;

  span + span {
    color: #8b4fa8;
  }
`

const SCTallButton = styled.button`
  display: flex;
  flex-direction: column;
  align-items: center;

  width: 100%;

  line-height: 15px;
`

const SCTallIcon = styled.span`
  display: flex;
  align-items: center;

  height: 37px;
  padding-top: 2px;
`

const SCCollapse = styled.button`
  align-self: flex-end;
  margin-left: auto;
  margin-right: 9px;
  padding-bottom: 2px;
`

const SCFormulaBar = styled.section`
  display: flex;
  flex-shrink: 0;

  height: 49px;
  padding: 11px 4px 9px;

  input {
    flex: 1;
    min-width: 0;
    padding: 0;
    border: none;
    outline: none;
    background: transparent;
    font-size: 15px;
    font-weight: 300;
    color: #555;
  }
`

const SCNameBox = styled.div`
  display: flex;
  align-items: center;

  width: 118px;
  padding: 0 5px;

  border: 1px solid #c6c6c6;
  background-color: #fff;
  color: #666;
`

const SCDots = styled.div`
  display: flex;
  align-items: center;
  justify-content: center;

  width: 29px;
`

const SCFormulaTools = styled.div`
  display: flex;
  align-items: center;

  width: 110px;
  margin-right: 2px;

  border: 1px solid #c6c6c6;
  background-color: #fff;
`

const SCFx = styled.i`
  font-family: 'Liberation Serif', serif;
  font-size: 18px;

  small {
    font-size: 13px;
  }
`

const SCFormula = styled.div`
  display: flex;
  align-items: center;
  flex: 1;

  padding: 0 4px 0 11px;

  border: 1px solid #c6c6c6;
  background-color: #fff;
`

const SCSheetArea = styled.section`
  display: flex;
  flex: 1;
  min-height: 0;
`

const SCSheet = styled.div`
  flex: 1;
  min-width: 0;
  overflow: hidden;

  border-right: 1px solid #9b9b9b;
  border-bottom: 1px solid #9b9b9b;
`

const SCTable = styled.table`
  width: 1281px;

  table-layout: fixed;
  border-collapse: separate;
  border-spacing: 0;

  font-family: 'Noto Sans CJK JP', sans-serif;
  font-size: 30px;
  font-weight: 300;
  font-feature-settings: normal;
  line-height: 40px;
  color: #000;
`

const SCCol = styled.col`
  width: ${({ $width }) => $width}px;
`

const SCCorner = styled.td`
  height: 50px;
  padding: 0 2px 2px 0;

  border-right: 1px solid #b4b4b4;
  border-bottom: 1px solid #9b9b9b;

  vertical-align: bottom;

  svg {
    margin-left: auto;
  }
`

const SCColumnHead = styled.th`
  height: 50px;
  padding: 0 0 8px;

  border-right: 1px solid #bdbdbd;
  border-bottom: 1px solid ${({ $selected }) => ($selected ? "#217346" : "#9b9b9b")};
  box-shadow: ${({ $selected }) => ($selected ? "inset 0 -1px #217346" : "none")};

  font-weight: 300;
  color: ${({ $selected }) => ($selected ? "#217346" : "#000")};
  background-color: ${({ $selected }) => ($selected ? "#d2d2d2" : "#e6e6e6")};
`

const SCRow = styled.tr`
  height: ${({ $height }) => $height}px;
`

const SCRowHead = styled.th`
  padding: 0 0 7px;

  border-right: 1px solid ${({ $selected }) => ($selected ? "#217346" : "#9b9b9b")};
  border-bottom: 1px solid #bdbdbd;
  box-shadow: ${({ $selected }) => ($selected ? "inset -1px 0 #217346" : "none")};

  font-weight: 300;
  vertical-align: bottom;
  color: ${({ $selected }) => ($selected ? "#217346" : "#000")};
  background-color: ${({ $selected }) => ($selected ? "#d2d2d2" : "#e6e6e6")};
`

const SCCell = styled.td`
  position: relative;
  padding: 0 7px 4px 5px;

  border-right: 1px solid #d6d6d6;
  border-bottom: 1px solid #d6d6d6;
  outline: ${({ $selected }) => ($selected ? "2px solid #217346" : "none")};
  outline-offset: -1px;
  z-index: ${({ $selected }) => ($selected ? 1 : 0)};

  text-align: ${({ $align = "left" }) => $align};
  white-space: nowrap;
  background-color: #fff;

  &::after {
    content: "";
    display: ${({ $selected }) => ($selected ? "block" : "none")};
    position: absolute;
    right: -2px;
    bottom: -2px;
    width: 5px;
    height: 5px;
    border: 1px solid #fff;
    border-width: 1px 0 0 1px;
    background-color: #217346;
  }
`

const SCVerticalScroll = styled.div`
  display: flex;
  flex-direction: column;

  width: 20px;
  padding: 3px 2px 0;
`

const SCScrollButton = styled.button`
  display: flex;
  align-items: center;
  justify-content: center;
  flex-shrink: 0;

  width: 16px;
  height: 15px;

  border: 1px solid #ababab;
  background-color: #fff;
  color: #000;
`

const SCVerticalTrack = styled.div`
  flex: 1;
  background-color: #f1f1f1;
`

const SCVerticalThumb = styled.div`
  height: 35%;

  border: 1px solid #ababab;
  border-top: none;
  background-color: #fff;
`

const SCSheetTabs = styled.nav`
  display: flex;
  flex-shrink: 0;

  height: 25px;

  border-bottom: 1px solid #cfcfcf;
`

const SCSheetNav = styled.div`
  display: flex;
  align-items: center;

  width: 89px;
  padding-left: 13px;
`

const SCSheetTab = styled.button`
  width: 70px;
  height: 23px;

  border-bottom: 2px solid #217346;

  font-size: 14px;
  line-height: 20px;
  color: #217346;
  background-color: #fff;
`

const SCAddSheet = styled.button`
  display: flex;
  align-items: center;
  justify-content: center;

  width: 78px;
`

const SCHorizontalScroll = styled.div`
  display: flex;
  align-items: center;

  width: 478px;
  margin-left: auto;
  margin-right: 20px;
`

const SCHorizontalTrack = styled.div`
  flex: 1;
  background-color: #f1f1f1;
`

const SCHorizontalThumb = styled.div`
  width: 87%;
  height: 15px;

  border: 1px solid #ababab;
  border-left: none;
  background-color: #fff;
`

const SCStatusBar = styled.footer`
  display: flex;
  align-items: center;
  flex-shrink: 0;

  height: 22px;
  padding-left: 12px;

  background-color: #f3f3f3;
`

const SCStatusText = styled.span`
  white-space: nowrap;
`

const SCStatusButton = styled.button`
  display: flex;
  align-items: center;
  gap: 1px;

  font-size: ${({ $kana }) => ($kana ? 11 : 12)}px;
`

const SCStatusRight = styled.div`
  display: flex;
  align-items: center;

  margin-left: auto;
  padding-right: 19px;

  color: #444;
`

const SCView = styled.button`
  display: flex;
  align-items: center;
  justify-content: center;

  width: 40px;
  height: 22px;

  background-color: ${({ $active }) => ($active ? "#c6c6c6" : "transparent")};
`

const SCZoom = styled.input`
  width: 100px;
  height: 12px;
  margin: 0;

  appearance: none;
  background:
    linear-gradient(#666, #666) center / 1px 6px no-repeat,
    linear-gradient(#777, #777) center / 100% 1px no-repeat;

  &::-webkit-slider-thumb {
    width: 5px;
    height: 12px;

    appearance: none;
    background-color: #444;
  }
`

const SCPercent = styled.button`
  width: 44px;

  font-size: 13px;
  text-align: right;
`

/* annotations drawn on top of the window */

const SCLeaders = styled.svg`
  position: absolute;
  top: 0;
  left: 0;
  z-index: 2;
  pointer-events: none;
`

const SCCallout = styled.p`
  position: absolute;
  top: ${({ $top }) => $top}px;
  left: ${({ $left }) => $left}px;
  z-index: 2;

  margin: 0;
  padding: ${({ $padding }) => $padding};

  border: 4px solid #f00;

  font-size: 37px;
  font-weight: 700;
  line-height: 48px;
  white-space: nowrap;
  color: #f00;
  background-color: #fff;
`
